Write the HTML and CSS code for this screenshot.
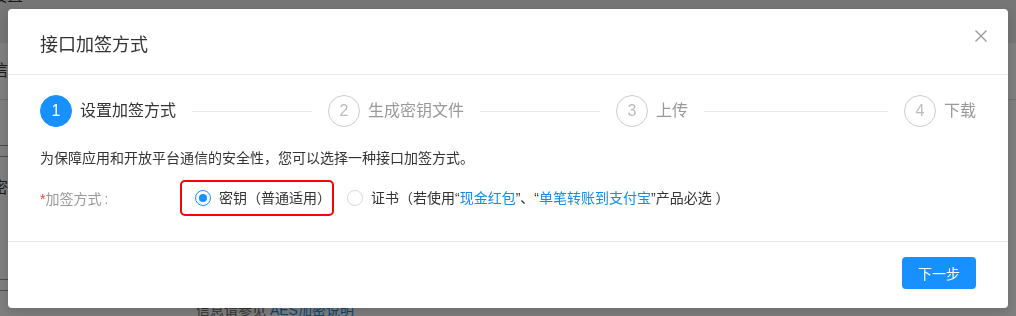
FILE: index.html
```html
<!DOCTYPE html>
<html lang="zh-CN">
<head>
<meta charset="utf-8">
<title>接口加签方式</title>
<link rel="stylesheet" href="styles.css">
</head>
<body>
<div class="page">
  <div class="pg-head"><div class="pg-crumb">设置</div></div>
  <div class="pg-sec"><div class="pg-sec-title">信息</div></div>
  <div class="pg-box"></div>
  <div class="pg-label">密</div>
  <div class="pg-box pg-box2"></div>
  <div class="pg-note">信息请参见 <span class="pg-link">AES加密说明</span></div>
</div>
<div class="mask"></div>
<div class="modal">
  <div class="modal-header">
    <div class="modal-title">接口加签方式</div>
    <svg class="modal-close" viewBox="0 0 12 12" width="12" height="12"><path d="M0.5 0.5 L11.5 11.5 M11.5 0.5 L0.5 11.5" stroke="#999" stroke-width="1.3" fill="none"/></svg>
  </div>
  <div class="modal-body">
    <div class="steps">
      <div class="step step-active">
        <div class="step-icon">1</div>
        <div class="step-title">设置加签方式</div>
        <div class="step-tail"></div>
      </div>
      <div class="step">
        <div class="step-icon">2</div>
        <div class="step-title">生成密钥文件</div>
        <div class="step-tail"></div>
      </div>
      <div class="step">
        <div class="step-icon">3</div>
        <div class="step-title">上传</div>
        <div class="step-tail"></div>
      </div>
      <div class="step step-last">
        <div class="step-icon">4</div>
        <div class="step-title">下载</div>
      </div>
    </div>
    <p class="desc">为保障应用和开放平台通信的安全性，您可以选择一种接口加签方式。</p>
    <div class="form-row">
      <div class="form-label"><span class="req">*</span>加签方式<span class="colon">:</span></div>
      <div class="radio-group">
        <div class="radio-box">
          <span class="radio radio-checked"></span><span class="radio-text">密钥（普通适用）</span>
        </div>
        <div class="radio-item">
          <span class="radio"></span><span class="radio-text">证书（若使用“<span class="link">现金红包</span>”、“<span class="link">单笔转账到支付宝</span>”产品必选 ）</span>
        </div>
      </div>
    </div>
  </div>
  <div class="modal-footer">
    <button class="btn-primary">下一步</button>
  </div>
</div>
</body>
</html>
```

FILE: styles.css
```css
html, body {
  margin: 0;
  padding: 0;
  width: 1016px;
  height: 316px;
  overflow: hidden;
  background: #fff;
  font-family: "Liberation Sans", "Noto Sans CJK SC", sans-serif;
  color: #333;
}

/* background page */
.page {
  width: 1016px;
  height: 316px;
  overflow: hidden;
}
.pg-head {
  height: 43px;
  background: #ededed;
  overflow: hidden;
}
.pg-crumb {
  margin: -13px 0 0 -9px;
  font-size: 16px;
  line-height: 18px;
  color: #333;
}
.pg-sec {
  height: 56px;
  border-bottom: 1px solid #e3e3e3;
  overflow: hidden;
}
.pg-sec-title {
  margin: 19px 0 0 -8px;
  font-size: 16px;
  line-height: 18px;
  color: #333;
}
.pg-box {
  margin-top: 45px;
  width: 40px;
  height: 10px;
  border-top: 1px solid #9a9a9a;
  border-bottom: 1px solid #9a9a9a;
}
.pg-label {
  margin: 22px 0 0 -8px;
  font-size: 16px;
  line-height: 18px;
  color: #333;
}
.pg-box2 {
  margin-top: 82px;
}
.pg-note {
  margin: 12px 0 0 196px;
  font-size: 14px;
  line-height: 14px;
  color: #666;
}
.pg-link {
  color: #108ee9;
}

.mask {
  position: fixed;
  inset: 0;
  background: rgba(0, 0, 0, 0.5);
}

/* modal */
.modal {
  position: absolute;
  left: 8px;
  top: 9px;
  width: 1000px;
  height: 299px;
  background: #fff;
  border-radius: 4px;
  box-shadow: 0 4px 12px rgba(0, 0, 0, 0.15);
  display: flex;
  flex-direction: column;
}
.modal-header {
  height: 65px;
  border-bottom: 1px solid #e9e9e9;
  display: flex;
  justify-content: space-between;
  align-items: flex-start;
  padding: 0 21px 0 32px;
}
.modal-title {
  margin-top: 23px;
  font-size: 18px;
  line-height: 26px;
  color: #333;
}
.modal-close {
  margin-top: 21px;
  display: block;
}
.modal-body {
  padding: 20px 32px 25px;
}

/* steps */
.steps {
  display: flex;
  height: 32px;
}
.step {
  flex: 1;
  min-width: 0;
  display: flex;
  align-items: center;
  margin-right: 16px;
  overflow: hidden;
}
.step-last {
  flex: none;
  margin-right: 0;
}
.step-icon {
  flex: none;
  width: 32px;
  height: 32px;
  box-sizing: border-box;
  border-radius: 50%;
  border: 1px solid #ccc;
  color: #bbb;
  font-size: 16px;
  display: flex;
  align-items: center;
  justify-content: center;
}
.step-title {
  margin-left: 8px;
  font-size: 16px;
  line-height: 32px;
  white-space: nowrap;
  color: #999;
}
.step-tail {
  flex: 1;
  height: 1px;
  background: #e9e9e9;
  margin-left: 16px;
}
.step-active .step-icon {
  background: #1890ff;
  border-color: #1890ff;
  color: #fff;
}
.step-active .step-title {
  color: #333;
}

.desc {
  margin: 20px 0 0;
  font-size: 14px;
  line-height: 22px;
  color: #333;
}

/* form */
.form-row {
  margin-top: 11px;
  height: 36px;
  display: flex;
  align-items: center;
  font-size: 14px;
}
.form-label {
  width: 140px;
  flex: none;
  color: #999;
}
.req {
  color: #f04134;
}
.colon {
  margin-left: 3px;
}
.radio-group {
  display: flex;
  align-items: center;
}
.radio-box {
  width: 154px;
  height: 36px;
  box-sizing: border-box;
  border: 2px solid #f00;
  border-radius: 5px;
  padding-left: 13px;
  display: flex;
  align-items: center;
  white-space: nowrap;
}
.radio-item {
  margin-left: 13px;
  display: flex;
  align-items: center;
  white-space: nowrap;
}
.radio {
  flex: none;
  width: 16px;
  height: 16px;
  box-sizing: border-box;
  border: 1px solid #d9d9d9;
  border-radius: 50%;
  display: flex;
  align-items: center;
  justify-content: center;
}
.radio-checked {
  border-color: #1890ff;
}
.radio-checked::after {
  content: "";
  width: 8px;
  height: 8px;
  border-radius: 50%;
  background: #1890ff;
}
.radio-text {
  padding-left: 8px;
  color: #333;
  line-height: 22px;
}
.link {
  color: #108ee9;
}

/* footer */
.modal-footer {
  border-top: 1px solid #e9e9e9;
  padding: 15px 32px 19px;
  display: flex;
  justify-content: flex-end;
}
.btn-primary {
  width: 74px;
  height: 32px;
  border: none;
  border-radius: 4px;
  background: #1890ff;
  color: #fff;
  font-family: "Liberation Sans", "Noto Sans CJK SC", sans-serif;
  font-size: 14px;
  padding: 0;
}
```
